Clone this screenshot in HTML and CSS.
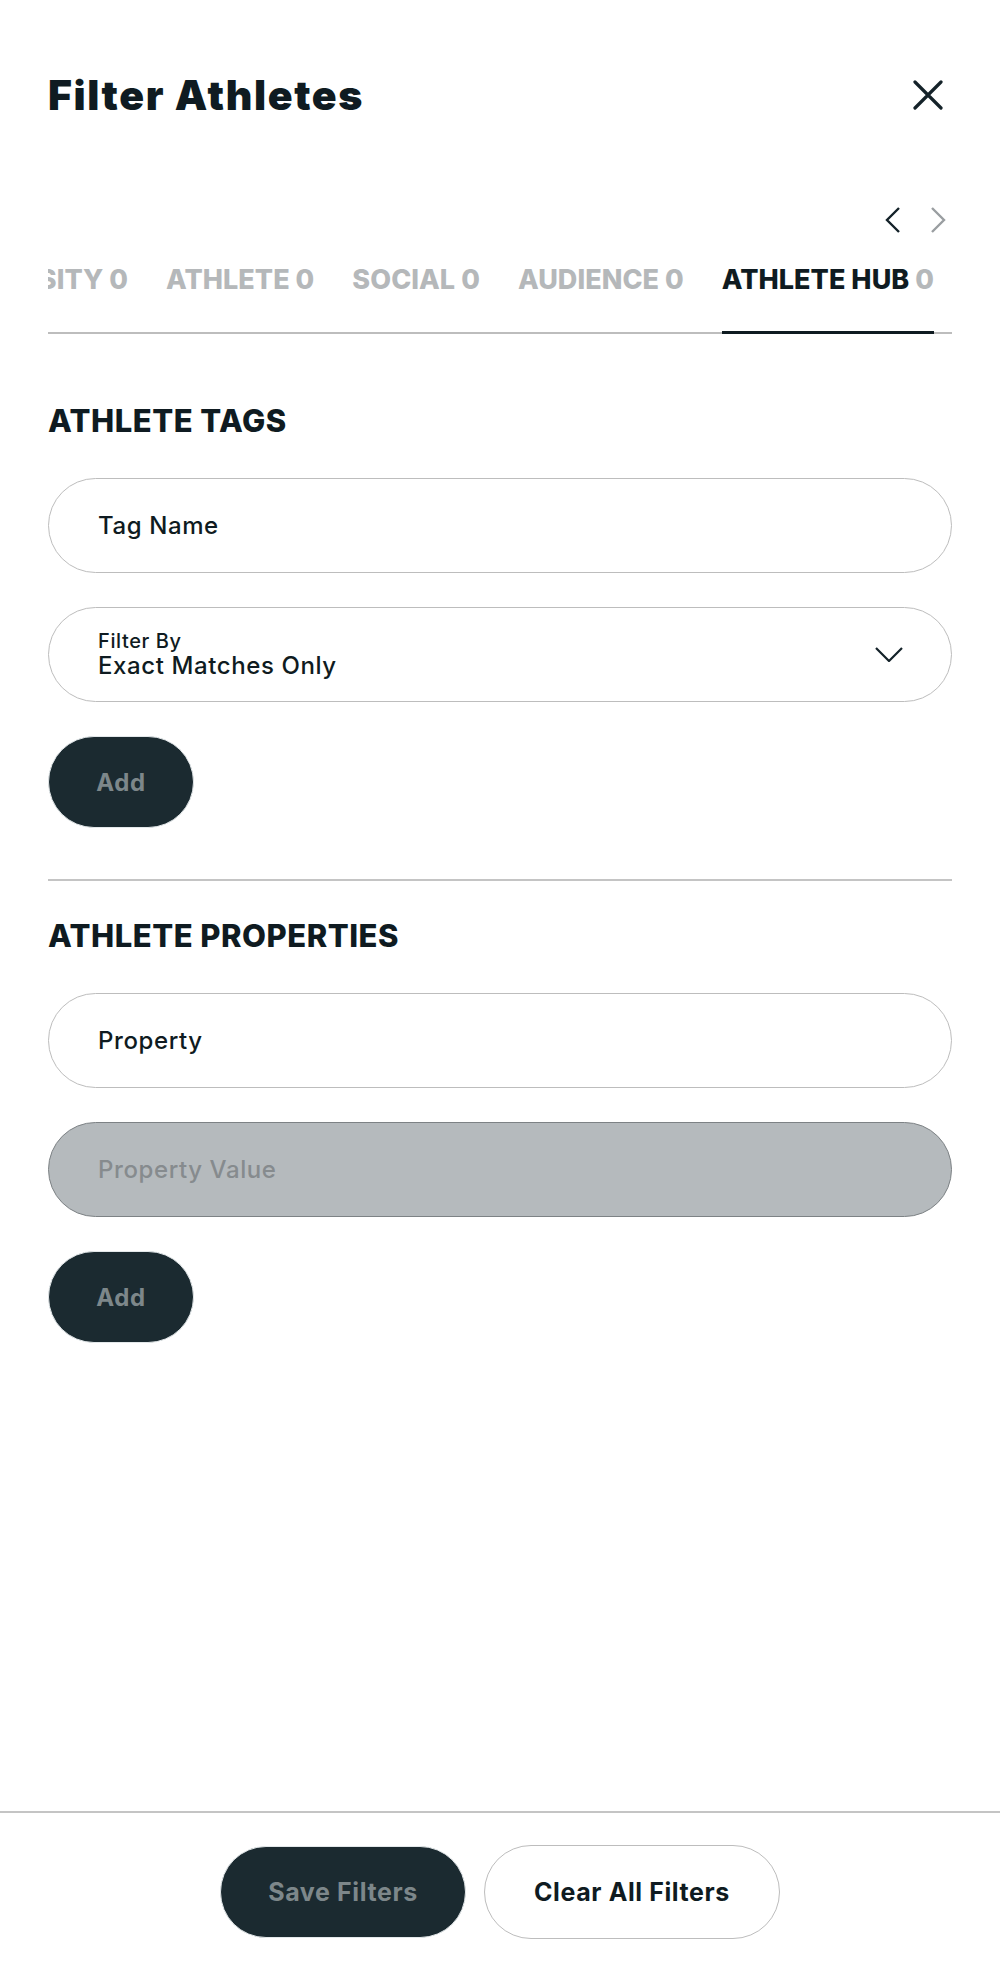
FILE: index.html
```html
<!DOCTYPE html>
<html lang="en">
<head>
<meta charset="utf-8">
<title>Filter Athletes</title>
<link rel="stylesheet" href="styles.css">
</head>
<body>
<div class="page">
  <main class="content">
    <header class="header">
      <h1 class="title">Filter Athletes</h1>
      <button class="close" aria-label="Close">
        <svg width="30" height="30" viewBox="0 0 30 30"><path d="M2 2 L28 28 M28 2 L2 28" stroke="#142229" stroke-width="3.2" stroke-linecap="round" fill="none"/></svg>
      </button>
    </header>

    <div class="tab-nav">
      <button class="arrow" aria-label="Previous">
        <svg width="16" height="26" viewBox="0 0 16 26"><path d="M14 1 L2 13 L14 25" stroke="#142229" stroke-width="2.4" fill="none"/></svg>
      </button>
      <button class="arrow" aria-label="Next">
        <svg width="16" height="26" viewBox="0 0 16 26"><path d="M2 1 L14 13 L2 25" stroke="#9a9ea1" stroke-width="2.4" fill="none"/></svg>
      </button>
    </div>

    <nav class="tabs">
      <div class="tab">UNIVERSITY <span class="count">0</span></div>
      <div class="tab">ATHLETE <span class="count">0</span></div>
      <div class="tab">SOCIAL <span class="count">0</span></div>
      <div class="tab">AUDIENCE <span class="count">0</span></div>
      <div class="tab active">ATHLETE HUB <span class="count">0</span></div>
    </nav>

    <section class="section">
      <h2 class="section-title">ATHLETE TAGS</h2>
      <input class="field" type="text" placeholder="Tag Name">
      <div class="field select">
        <div class="select-text">
          <span class="select-label">Filter By</span>
          <span class="select-value">Exact Matches Only</span>
        </div>
        <svg class="chev" width="28" height="15" viewBox="0 0 28 15"><path d="M1 1 L14 14 L27 1" stroke="#142229" stroke-width="2.2" fill="none"/></svg>
      </div>
      <button class="btn btn-dark btn-add">Add</button>
    </section>

    <hr class="divider">

    <section class="section">
      <h2 class="section-title">ATHLETE PROPERTIES</h2>
      <input class="field" type="text" placeholder="Property">
      <input class="field disabled" type="text" placeholder="Property Value" disabled>
      <button class="btn btn-dark btn-add">Add</button>
    </section>
  </main>

  <footer class="footer">
    <button class="btn btn-dark btn-save">Save Filters</button>
    <button class="btn btn-light btn-clear">Clear All Filters</button>
  </footer>
</div>
</body>
</html>
```

FILE: styles.css
```css
* { box-sizing: border-box; }

body {
  margin: 0;
  background: #ffffff;
  font-family: Inter, "Liberation Sans", Arial, sans-serif;
  color: #0f1b21;
}

.page {
  min-height: 100vh;
  display: flex;
  flex-direction: column;
}

.content {
  flex: 1;
  padding: 71px 48px 0 48px;
}

.header {
  display: flex;
  justify-content: space-between;
  align-items: center;
  height: 48px;
}

.title {
  margin: 0;
  font-size: 41px;
  line-height: 48px;
  font-weight: 900;
  letter-spacing: 1.6px;
  color: #0f1b21;
}

.close {
  border: 0;
  background: none;
  padding: 0;
  margin-right: 9px;
  width: 30px;
  height: 30px;
  display: flex;
}

.tab-nav {
  display: flex;
  justify-content: flex-end;
  gap: 29px;
  margin-top: 88px;
  padding-right: 6px;
  height: 26px;
}

.arrow {
  border: 0;
  background: none;
  padding: 0;
  display: flex;
}

.tabs {
  margin-top: 31px;
  display: flex;
  justify-content: flex-end;
  gap: 38px;
  overflow: hidden;
  padding-right: 18px;
  box-shadow: inset 0 -2px 0 #bdbdbd;
}

.tab {
  flex: none;
  white-space: nowrap;
  font-size: 27px;
  line-height: 32px;
  font-weight: 800;
  letter-spacing: 0.05px;
  color: #b5b8ba;
  padding-bottom: 35px;
  border-bottom: 3px solid transparent;
}

.tab.active {
  color: #0f1b21;
  border-bottom-color: #0f1b21;
}

.tab .count { color: #b5b8ba; }

.section {
  display: flex;
  flex-direction: column;
  align-items: flex-start;
}

.section-title {
  margin: 68px 0 38px 0;
  font-size: 31px;
  line-height: 38px;
  font-weight: 800;
  letter-spacing: 0.5px;
  color: #0f1b21;
}

.divider + .section .section-title { margin-top: 36px; }

.field {
  width: 100%;
  height: 95px;
  border: 1.5px solid #bdbdbd;
  border-radius: 999px;
  padding: 0 48px 0 49px;
  margin: 0 0 34px 0;
  background: #ffffff;
  font-family: Inter, "Liberation Sans", Arial, sans-serif;
  font-size: 24px;
  font-weight: 500;
  letter-spacing: 0.6px;
  color: #0f1b21;
  outline: none;
}

.field::placeholder { color: #0f1b21; opacity: 1; }

.field.disabled {
  background: #b5babd;
  border-color: #7d8285;
}

.field.disabled::placeholder { color: #868b8e; }

.select {
  display: flex;
  align-items: center;
  justify-content: space-between;
}

.select-text {
  display: flex;
  flex-direction: column;
  padding-top: 1px;
}

.select-label {
  font-size: 20px;
  line-height: 22px;
  font-weight: 500;
  letter-spacing: 0.6px;
}

.select-value {
  font-size: 24px;
  line-height: 28px;
  font-weight: 500;
  letter-spacing: 0.6px;
}

.btn {
  border-radius: 999px;
  height: 92px;
  font-family: Inter, "Liberation Sans", Arial, sans-serif;
  font-weight: 700;
  font-size: 25px;
  letter-spacing: 0.6px;
  cursor: pointer;
}

.btn-dark {
  background: #1b2a30;
  color: #7d878a;
  border: 1.5px solid #e3e8ea;
}

.btn-light {
  background: #ffffff;
  color: #0f1b21;
  border: 1.5px solid #bdbdbd;
}

.btn-add {
  width: 146px;
  padding: 0;
  font-size: 24px;
}

.divider {
  margin: 51px 0 0 0;
  border: 0;
  height: 2px;
  background: #c4c4c4;
}

.footer {
  border-top: 2px solid #c4c4c4;
  height: 161px;
  display: flex;
  justify-content: center;
  align-items: flex-start;
  gap: 18px;
  padding-top: 33px;
}

.btn-save { width: 246px; padding: 0; }
.btn-clear { width: 296px; padding: 0; height: 94px; margin-top: -1px; }
```
